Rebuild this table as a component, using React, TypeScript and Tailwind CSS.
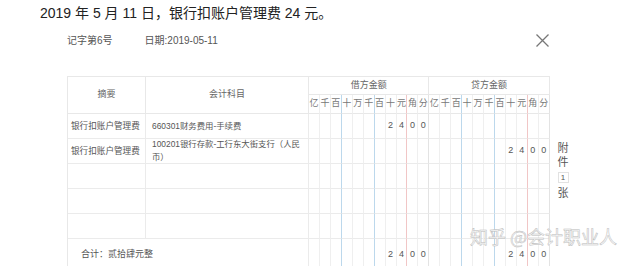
const units = ['亿', '千', '百', '十', '万', '千', '百', '十', '元', '角', '分'];

type Row = { summary: string; account: string; debit: string; credit: string };

const rows: Row[] = [
  { summary: '银行扣账户管理费', account: '660301财务费用-手续费', debit: '2400', credit: '' },
  { summary: '银行扣账户管理费', account: '100201银行存款-工行东大街支行（人民币）', debit: '', credit: '2400' },
  { summary: '', account: '', debit: '', credit: '' },
  { summary: '', account: '', debit: '', credit: '' },
  { summary: '', account: '', debit: '', credit: '' },
];

function lineColor(i: number) {
  if (i === 2 || i === 5) return 'border-r-[#bcd8ec]';
  if (i === 8) return 'border-r-[#f1c6c6]';
  if (i === 10) return 'border-r-[#e3e3e3]';
  return 'border-r-[#efefef]';
}

// put the amount (in 分) right-aligned into the 11 unit columns
function digitsOf(amount: string) {
  const cells = Array(11).fill('');
  const chars = amount.split('');
  chars.forEach((c, k) => {
    cells[11 - chars.length + k] = c;
  });
  return cells;
}

function AmountCells({ amount, tall }: { amount: string; tall?: boolean }) {
  return (
    <>
      {digitsOf(amount).map((d, i) => (
        <div
          key={i}
          className={`flex justify-center border-r border-b border-b-[#ebebeb] text-[9px] text-[#555] ${lineColor(i)} ${
            tall ? 'items-end pb-[7px]' : 'items-center'
          }`}
        >
          {d}
        </div>
      ))}
    </>
  );
}

export default function App() {
  return (
    <div className="relative h-[266px] w-[640px] overflow-hidden bg-white font-['Liberation_Sans','Noto_Sans_CJK_SC',sans-serif]">
      <div className="pl-[40px] pt-[3px] text-[14px] leading-[20px] text-[#222]">
        2019 年 5 月 11 日，银行扣账户管理费 24 元。
      </div>

      <div className="mt-[7px] ml-[67px] flex h-[20px] w-[482px] items-center justify-between">
        <div className="flex gap-[32px] text-[10px] text-[#555]">
          <span>记字第6号</span>
          <span>日期:2019-05-11</span>
        </div>
        <svg width="13" height="13" viewBox="0 0 13 13" className="text-[#777]">
          <path d="M0.5 0.5 12.5 12.5M12.5 0.5 0.5 12.5" stroke="currentColor" strokeWidth="1.3" />
        </svg>
      </div>

      <div className="mt-[26px] ml-[67px] flex items-start">
        <div className="grid w-[483px] grid-cols-[78px_163px_repeat(22,10.95px)] grid-rows-[18px_19px_25px_25px_25px_25px_25px_30px] border-t border-l border-[#e8e8e8] text-[#666]">
          <div className="row-span-2 flex items-center justify-center border-r border-b border-[#e8e8e8] text-[9px]">
            摘要
          </div>
          <div className="row-span-2 flex items-center justify-center border-r border-b border-[#e8e8e8] text-[9px]">
            会计科目
          </div>
          <div className="col-span-11 flex items-center justify-center border-r border-b border-[#e8e8e8] text-[9px]">
            借方金额
          </div>
          <div className="col-span-11 flex items-center justify-center border-r border-b border-[#e8e8e8] text-[9px]">
            贷方金额
          </div>
          {[0, 1].map((s) =>
            units.map((u, i) => (
              <div
                key={`${s}-${i}`}
                className={`flex items-center justify-center border-r border-b border-b-[#e8e8e8] text-[9px] text-[#777] ${lineColor(i)}`}
              >
                {u}
              </div>
            ))
          )}

          {rows.map((r, n) => (
            <div key={n} className="contents">
              <div className="flex items-center border-r border-b border-[#ebebeb] pl-[3px] text-[8.6px] text-[#555]">
                {r.summary}
              </div>
              <div className="flex items-center border-r border-b border-[#ebebeb] pr-[1px] pl-[6px] text-[8.4px] leading-[13px] text-[#555]">
                {r.account}
              </div>
              <AmountCells amount={r.debit} />
              <AmountCells amount={r.credit} />
            </div>
          ))}

          <div className="col-span-2 flex items-end border-r border-b border-[#ebebeb] pb-[7px] pl-[13px] text-[9px] text-[#555]">
            合计：贰拾肆元整
          </div>
          <AmountCells amount="2400" tall />
          <AmountCells amount="2400" tall />
        </div>

        <div className="mt-[65px] ml-[6px] flex w-[14px] flex-col items-center text-[11px] leading-[14px] text-[#555]">
          <span>附</span>
          <span>件</span>
          <span className="my-[3px] flex h-[11px] w-[11px] items-center justify-center border border-[#e2e2e2] text-[8px]">
            1
          </span>
          <span>张</span>
        </div>
      </div>

      <div className="absolute top-[224px] left-[470px] font-['Noto_Sans_CJK_SC',sans-serif] text-[18px] leading-[24px] text-[#fafafa] [-webkit-text-stroke:0.5px_#bbbbbb]">
        知乎 @会计职业人
      </div>
    </div>
  );
}
